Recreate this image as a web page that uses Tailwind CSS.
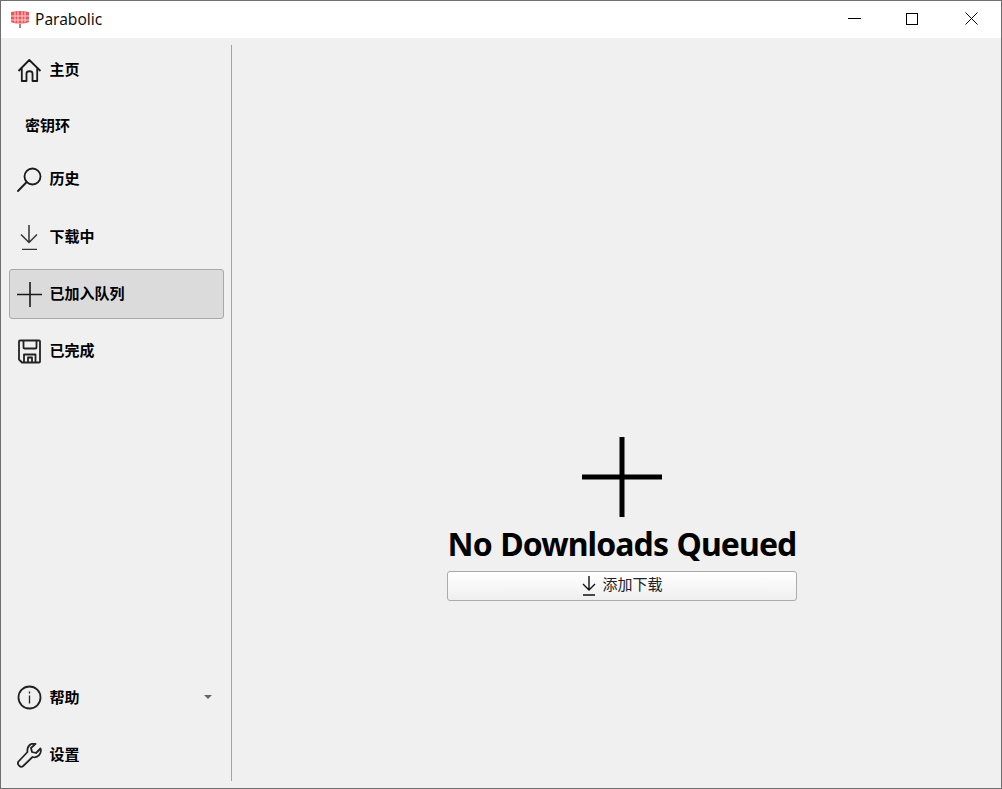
<!DOCTYPE html>
<html lang="zh">
<head>
<meta charset="utf-8">
<script src="https://cdn.jsdelivr.net/npm/@tailwindcss/browser@4"></script>
</head>
<body class="m-0 overflow-hidden">
<div class="w-[1002px] h-[789px] flex flex-col border border-[#6f6f6f] bg-[#f0f0f0] font-['Noto_Sans','Noto_Sans_CJK_SC',sans-serif] text-black">
  <header class="h-[37px] shrink-0 bg-white flex items-center">
    <svg class="ml-[9px] -mt-[2px] w-[20px] h-[20px]" viewBox="0 0 20 20" fill="none">
      <path d="M1 3 C6 1.500 14 1.500 19 3 V13 C15 15 5 15 1 13 Z" fill="#e9585e"/>
      <path d="M9 15 h2 v4 h-2 z" fill="#b98080"/>
      <path d="M1 7h18M1 11h18M5 2.500v11M8 2v12.500M12 2v12.500M15 2.500v11" stroke="#fbcfcf" stroke-width="1"/>
    </svg>
    <span class="ml-[5px] text-[15.500px] leading-none text-[#111]">Parabolic</span>
    <div class="ml-auto flex items-center mr-[24px] -mt-[2px]">
      <svg class="w-[13px] h-[13px]" viewBox="0 0 13 13"><path d="M0 6.500h13" stroke="#000" stroke-width="1"/></svg>
      <svg class="ml-[45px] w-[12px] h-[12px]" viewBox="0 0 12 12" fill="none"><rect x=".5" y=".5" width="11" height="11" stroke="#000"/></svg>
      <svg class="ml-[47px] -mr-px w-[13px] h-[13px]" viewBox="0 0 13 13"><path d="M.5.500l12 12M12.500.500l-12 12" stroke="#000" stroke-width="1"/></svg>
    </div>
  </header>
  <div class="flex-1 flex min-h-0">
    <aside class="w-[231px] shrink-0 mt-[7px] mb-[7px] pb-[1px] border-r border-[#a3a3a3] flex flex-col pl-[8px] pr-[7px] text-[15px] leading-none font-bold">
      <div class="h-[50px] flex items-center px-[8px] gap-[8px]">
        <svg class="w-[25px] h-[25px]" viewBox="0 0 25 25" fill="none" stroke="#1a1a1a" stroke-width="1.800" stroke-linejoin="round"><path d="M1.500 13 12.300 2 23.500 13M4.800 10.500V23H9.500V15.500C9.500 12.500 15.500 12.500 15.500 15.500V23H20.200V10.500"/></svg>
        <span class="-mt-[2px] -ml-[0.5px]">主页</span>
      </div>
      <div class="h-[50px] mt-[5px] flex items-center pl-[16px]"><span>密钥环</span></div>
      <div class="h-[50px] mt-[4px] flex items-center px-[8px] gap-[8px]">
        <svg class="w-[25px] h-[25px]" viewBox="0 0 25 25" fill="none" stroke="#1a1a1a" stroke-width="1.800"><circle cx="15.500" cy="9.500" r="8"/><path d="M9.700 15 1 24" stroke-linecap="round"/></svg>
        <span class="-mt-[2px] -ml-[0.5px]">历史</span>
      </div>
      <div class="h-[50px] mt-[8px] flex items-center px-[8px] gap-[8px]">
        <svg class="w-[25px] h-[25px]" viewBox="0 0 25 25" fill="none" stroke="#333" stroke-width="1.500"><path d="M12 0V17M4 9.500 12 17.500 20 9.500M5 24.500H20"/></svg>
        <span class="-mt-[2px] -ml-[0.5px]">下载中</span>
      </div>
      <div class="h-[50px] mt-[7px] flex items-center px-[7px] gap-[8px] rounded-[3px] border border-[#a9a9a9] bg-[#dbdbdb]">
        <svg class="w-[25px] h-[25px]" viewBox="0 0 25 25" fill="none" stroke="#1a1a1a" stroke-width="1.600"><path d="M13 0V25M0 12.500H25"/></svg>
        <span class="-mt-[2px] -ml-[0.5px]">已加入队列</span>
      </div>
      <div class="h-[50px] mt-[7px] flex items-center px-[8px] gap-[8px]">
        <svg class="w-[25px] h-[25px]" viewBox="0 0 25 25" fill="none" stroke="#222" stroke-width="1.800" stroke-linejoin="round"><path d="M2 2.500Q2 1.500 3 1.500H22Q23 1.500 23 2.500V22.500Q23 23.500 22 23.500H5L2 20.500ZM6.500 1.500V8.500Q6.500 9.500 7.500 9.500H18.500Q19.500 9.500 19.500 8.500V1.500M7 23.500V15.500H18.500V23.500M11 23.500V18.500H15V23.500"/></svg>
        <span class="-mt-[2px] -ml-[0.5px]">已完成</span>
      </div>
      <div class="mt-auto h-[50px] flex items-center px-[8px] gap-[8px]">
        <svg class="w-[25px] h-[25px]" viewBox="0 0 25 25" fill="none" stroke="#222" stroke-width="1.800"><circle cx="12.500" cy="12.500" r="11"/><path d="M12.500 10.500V18.500M12.500 6.500V8.500" stroke-width="1.300"/></svg>
        <span class="-ml-[0.5px]">帮助</span>
        <svg class="ml-auto mr-[4px] w-[8px] h-[4px]" viewBox="0 0 8 4"><path d="M0 0H8L4 4Z" fill="#666"/></svg>
      </div>
      <div class="h-[50px] mt-[8px] flex items-center px-[8px] gap-[8px]">
        <svg class="w-[25px] h-[25px]" viewBox="0 0 25 25" fill="none" stroke="#222" stroke-width="1.800" stroke-linejoin="round"><path d="M23.500 5.500 19 10 15 9 14 5 18.500 .900C14 -.300 9.500 3 10.500 9L1.500 18.500C-.500 21 3.500 25.500 6.200 23L15.500 14C21 15.500 25 10.500 23.500 5.500Z"/></svg>
        <span class="-mt-[2px] -ml-[0.5px]">设置</span>
      </div>
    </aside>
    <main class="flex-1 flex flex-col items-center pt-[399px] pl-[11px]">
      <svg class="w-[80px] h-[80px] block" viewBox="0 0 80 80"><path d="M40 0V80M0 40H80" stroke="#000" stroke-width="5"/></svg>
      <h1 class="mt-[8px] h-[38px] text-[32px] leading-[38px] tracking-[-0.9px] [word-spacing:1px] font-bold whitespace-nowrap">No Downloads Queued</h1>
      <button class="mt-[8px] w-[350px] h-[30px] rounded-[3px] border border-[#ababab] bg-gradient-to-b from-white to-[#efefef] flex items-center justify-center gap-[5px] text-[15px] leading-none text-[#222]">
        <svg class="w-[16px] h-[20px]" viewBox="0 0 16 20" fill="none" stroke="#111" stroke-width="1.400"><path d="M8 0V13.500M2 8 8 14 14 8M2 19H14"/></svg>
        <span class="-mt-[3px]">添加下载</span>
      </button>
    </main>
  </div>
</div>
</body>
</html>
